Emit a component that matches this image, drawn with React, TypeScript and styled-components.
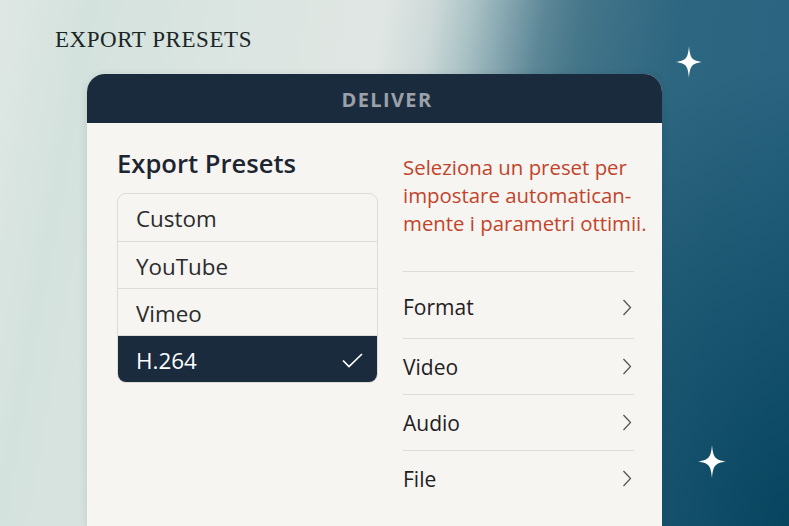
import React from "react";
import styled, { createGlobalStyle } from "styled-components";

const Global = createGlobalStyle`
  html, body { margin: 0; padding: 0; }
  body { font-family: "Open Sans", "Noto Sans", sans-serif; }
  * { box-sizing: border-box; }
`;

const Page = styled.div`
  position: relative;
  width: 789px;
  height: 526px;
  overflow: hidden;
  display: flex;
  flex-direction: column;
  background:
    radial-gradient(ellipse 330px 460px at 100% 100%, rgba(2, 64, 90, 0.85), rgba(2, 64, 90, 0) 100%),
    linear-gradient(
      100deg,
      #dfe7e4 0%,
      #d4e2dd 10%,
      #dce5e1 30%,
      #e0e6e3 43.7%,
      #cdd9d8 49.4%,
      #a9c1c4 53.9%,
      #7ea0ab 58.4%,
      #5d8797 61.9%,
      #457689 66.4%,
      #3b6f86 70.9%,
      #2d6680 77.7%,
      #2a6480 90%,
      #245f7b 100%
    );
`;

const PageTitle = styled.h1`
  margin: 26px 0 0 55px;
  font-family: "Liberation Serif", "DejaVu Serif", serif;
  font-weight: 400;
  font-size: 23px;
  line-height: 28px;
  letter-spacing: 0.55px;
  color: #1a2526;
`;

const Card = styled.section`
  margin: 20px 0 0 87px;
  width: 575px;
  flex: 1;
  display: flex;
  flex-direction: column;
  background: #f7f5f1;
  border-radius: 18px 18px 0 0;
  overflow: hidden;
  box-shadow: 0 2px 10px rgba(10, 30, 40, 0.12);
`;

const CardHeader = styled.header`
  height: 49px;
  flex: none;
  display: flex;
  align-items: center;
  justify-content: center;
  padding: 2px 0 0 25px;
  background: #1b2b3e;
  color: #9ca1a9;
  font-size: 20px;
  font-weight: 700;
  letter-spacing: 1.4px;
`;

const CardBody = styled.div`
  display: grid;
  grid-template-columns: 261px 231px;
  column-gap: 25px;
  padding: 25px 28px 0 30px;
  align-items: start;
`;

const Column = styled.div<{ $offset?: number }>`
  display: flex;
  flex-direction: column;
  margin-top: ${(p) => p.$offset ?? 0}px;
`;

const SectionTitle = styled.h2`
  margin: 0;
  font-size: 25.6px;
  line-height: 32px;
  font-weight: 600;
  color: #1c2530;
`;

const PresetList = styled.ul`
  list-style: none;
  margin: 13px 0 0;
  padding: 0;
  border: 1px solid #dedad4;
  border-radius: 9px;
  overflow: hidden;
`;

const PresetItem = styled.li<{ $selected?: boolean }>`
  height: 47px;
  display: flex;
  align-items: center;
  justify-content: space-between;
  padding: 2px 14px 0 18px;
  font-size: 22.4px;
  color: ${(p) => (p.$selected ? "#ffffff" : "#2a2b2d")};
  background: ${(p) => (p.$selected ? "#1a2b3e" : "transparent")};
  & + & {
    border-top: 1px solid #e0ddd8;
  }
`;

const Description = styled.p`
  margin: 0;
  font-size: 20.4px;
  line-height: 28px;
  white-space: nowrap;
  color: #c1442b;
`;

const SettingsList = styled.ul`
  list-style: none;
  margin: 34px 0 0;
  padding: 0;
  border-top: 1px solid #e0ddd8;
`;

const SettingRow = styled.li<{ $lead?: boolean }>`
  height: ${(p) => (p.$lead ? 66 : 56)}px;
  padding: ${(p) => (p.$lead ? "4px" : "0")} 2px 0 0;
  display: flex;
  align-items: center;
  justify-content: space-between;
  font-size: 21px;
  color: #1f2022;
  & + & {
    border-top: 1px solid #e0ddd8;
  }
`;

const Sparkle = styled.svg<{ $x: number; $y: number }>`
  position: absolute;
  left: ${(p) => p.$x}px;
  top: ${(p) => p.$y}px;
`;

const Chevron = () => (
  <svg width="10" height="17" viewBox="0 0 10 17">
    <polyline points="1.5,1 8.5,8.5 1.5,16" fill="none" stroke="#555" strokeWidth="1.3" />
  </svg>
);

const Check = () => (
  <svg width="21" height="15" viewBox="0 0 21 15">
    <polyline points="1,7.5 7,13.5 20,1" fill="none" stroke="#fff" strokeWidth="1.7" />
  </svg>
);

const Star = ({ x, y, w, h }: { x: number; y: number; w: number; h: number }) => (
  <Sparkle $x={x} $y={y} width={w} height={h} viewBox="-16 -16 32 32" preserveAspectRatio="none">
    <path
      d="M0,-16 C1.2,-4 3,-1.6 15,0 C3,1.6 1.2,4 0,16 C-1.2,4 -3,1.6 -15,0 C-3,-1.6 -1.2,-4 0,-16 Z"
      fill="#ffffff"
    />
  </Sparkle>
);

const presets = ["Custom", "YouTube", "Vimeo", "H.264"];
const settings = ["Format", "Video", "Audio", "File"];

export default function App() {
  return (
    <>
      <Global />
      <Page>
        <PageTitle>EXPORT PRESETS</PageTitle>
        <Card>
          <CardHeader>DELIVER</CardHeader>
          <CardBody>
            <Column>
              <SectionTitle>Export Presets</SectionTitle>
              <PresetList>
                {presets.map((p) => (
                  <PresetItem key={p} $selected={p === "H.264"}>
                    <span>{p}</span>
                    {p === "H.264" && <Check />}
                  </PresetItem>
                ))}
              </PresetList>
            </Column>
            <Column $offset={5}>
              <Description>
                Seleziona un preset per
                <br />
                impostare automatican-
                <br />
                mente i parametri ottimii.
              </Description>
              <SettingsList>
                {settings.map((s, i) => (
                  <SettingRow key={s} $lead={i === 0}>
                    <span>{s}</span>
                    <Chevron />
                  </SettingRow>
                ))}
              </SettingsList>
            </Column>
          </CardBody>
        </Card>
        <Star x={675} y={46} w={28} h={32} />
        <Star x={697} y={445} w={30} h={33} />
      </Page>
    </>
  );
}
